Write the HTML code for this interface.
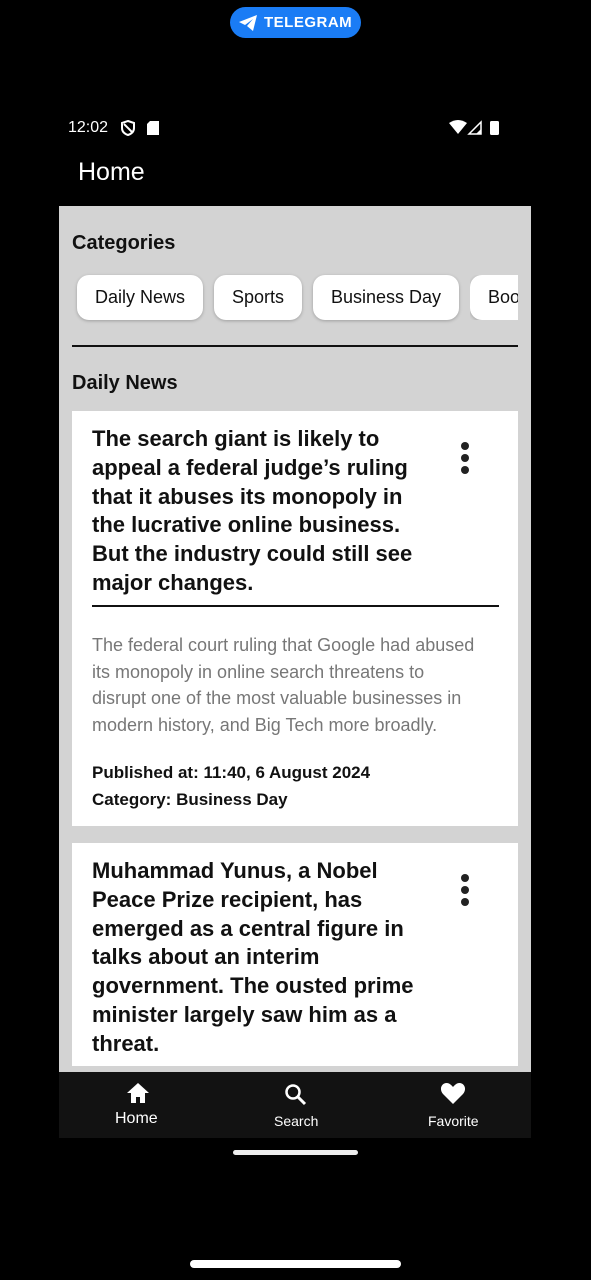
<!DOCTYPE html>
<html><head><meta charset="utf-8"><style>
*{margin:0;padding:0;box-sizing:border-box}
body{width:591px;height:1280px;background:#000;font-family:"Liberation Sans",sans-serif;position:relative;overflow:hidden;color:#111}
.abs{position:absolute}
.tg{left:230px;top:7px;width:131px;height:31px;border-radius:16px;background:#1a7cf5;color:#fff;font-size:15px;font-weight:bold;letter-spacing:.5px}
.panel{left:59px;top:206px;width:472px;height:866px;background:#d3d3d3;overflow:hidden}
.chip{position:absolute;top:69px;height:45px;background:#fff;border-radius:12px;font-size:18px;line-height:45px;padding:0 18px;box-shadow:0 1px 3px rgba(0,0,0,.25)}
.card{position:absolute;left:13px;width:446px;background:#fff}
.title{position:absolute;left:20px;width:340px;font-size:22px;line-height:28.8px;font-weight:bold;color:#111}
.dots{position:absolute;left:389px;width:8px}
.dots i{display:block;width:8px;height:8px;border-radius:50%;background:#222;margin-bottom:4px}
.nav{left:59px;top:1072px;width:472px;height:66px;background:#121212;color:#fff}
</style></head><body>
<div class="abs tg"><svg class="abs" style="left:8px;top:7px" width="20" height="18" viewBox="0 0 20 18"><path d="M1 8 L19 1 L15 17 L9 12 L15 5 L7 11 Z" fill="#fff"/></svg><span class="abs" style="left:34px;top:7px">TELEGRAM</span></div>
<div class="abs" style="left:68px;top:119px;color:#fff;font-size:16px">12:02</div>
<svg class="abs" style="left:121px;top:120px" width="14" height="16" viewBox="0 0 14 16"><path d="M7 1 L13 3 V8 C13 12 10 14 7 15 C4 14 1 12 1 8 V3 Z M3 4 L11 12" fill="none" stroke="#fff" stroke-width="2"/></svg>
<svg class="abs" style="left:147px;top:121px" width="12" height="14"><path d="M3 0 H12 V14 H0 V3 Z" fill="#fff"/></svg>
<svg class="abs" style="left:449px;top:120px" width="52" height="15"><path d="M0 3 Q9 -3 18 3 L9 14 Z" fill="#fff"/><path d="M20 14 L32 2 V14 Z" fill="none" stroke="#fff" stroke-width="1.5"/><path d="M27 14 L32 9 V14Z" fill="#fff"/><rect x="41" y="1" width="9" height="14" rx="1.5" fill="#fff"/></svg>
<div class="abs" style="left:78px;top:158px;color:#fff;font-size:25px">Home</div>
<div class="abs panel">
<div class="abs" style="left:13px;top:26px;font-size:20px;font-weight:bold">Categories</div>
<div class="chip" style="left:18px">Daily News</div>
<div class="chip" style="left:155px">Sports</div>
<div class="chip" style="left:254px">Business Day</div>
<div class="abs" style="left:411px;top:69px;width:48px;height:45px;overflow:hidden"><div class="chip" style="left:0;top:0;border-radius:12px 0 0 12px">Books</div></div>
<div class="abs" style="left:13px;top:139px;width:446px;height:2px;background:#111"></div>
<div class="abs" style="left:13px;top:166px;font-size:20px;font-weight:bold">Daily News</div>
<div class="card" style="top:205px;height:415px">
<div class="title" style="top:14px">The search giant is likely to appeal a federal judge’s ruling that it abuses its monopoly in the lucrative online business. But the industry could still see major changes.</div>
<div class="dots" style="top:31px"><i></i><i></i><i></i></div>
<div class="abs" style="left:20px;top:194px;width:407px;height:2px;background:#111"></div>
<div class="abs" style="left:20px;top:221px;width:420px;font-size:18px;line-height:26.5px;color:#777;white-space:nowrap">The federal court ruling that Google had abused<br>its monopoly in online search threatens to<br>disrupt one of the most valuable businesses in<br>modern history, and Big Tech more broadly.</div>
<div class="abs" style="left:20px;top:348px;font-size:17px;line-height:27px;font-weight:bold">Published at: 11:40, 6 August 2024<br>Category: Business Day</div>
</div>
<div class="card" style="top:637px;height:223px">
<div class="title" style="top:14px">Muhammad Yunus, a Nobel Peace Prize recipient, has emerged as a central figure in talks about an interim government. The ousted prime minister largely saw him as a threat.</div>
<div class="dots" style="top:31px"><i></i><i></i><i></i></div>
</div>
</div>
<div class="abs nav">
<svg class="abs" style="left:67px;top:10px" width="24" height="22" viewBox="0 0 24 22"><path d="M12 1 L23 11 H19 V21 H14 V15 H10 V21 H5 V11 H1 Z" fill="#fff"/></svg>
<div class="abs" style="left:56px;top:38px;font-size:16px">Home</div>
<svg class="abs" style="left:224px;top:10px" width="24" height="24" viewBox="0 0 24 24"><circle cx="10" cy="10" r="6.5" fill="none" stroke="#fff" stroke-width="2.5"/><path d="M15 15 L22 22" stroke="#fff" stroke-width="3"/></svg>
<div class="abs" style="left:215px;top:41px;font-size:14px">Search</div>
<svg class="abs" style="left:381px;top:10px" width="26" height="23" viewBox="0 0 26 23"><path d="M13 22 L3 12 C-2 6 3 -1 9 1.5 C11 2.5 12 4 13 5 C14 4 15 2.5 17 1.5 C23 -1 28 6 23 12 Z" fill="#fff"/></svg>
<div class="abs" style="left:369px;top:41px;font-size:14px">Favorite</div>
</div>
<div class="abs" style="left:233px;top:1150px;width:125px;height:5px;border-radius:3px;background:#eee"></div>
<div class="abs" style="left:190px;top:1260px;width:211px;height:8px;border-radius:4px;background:#fff"></div>
</body></html>
